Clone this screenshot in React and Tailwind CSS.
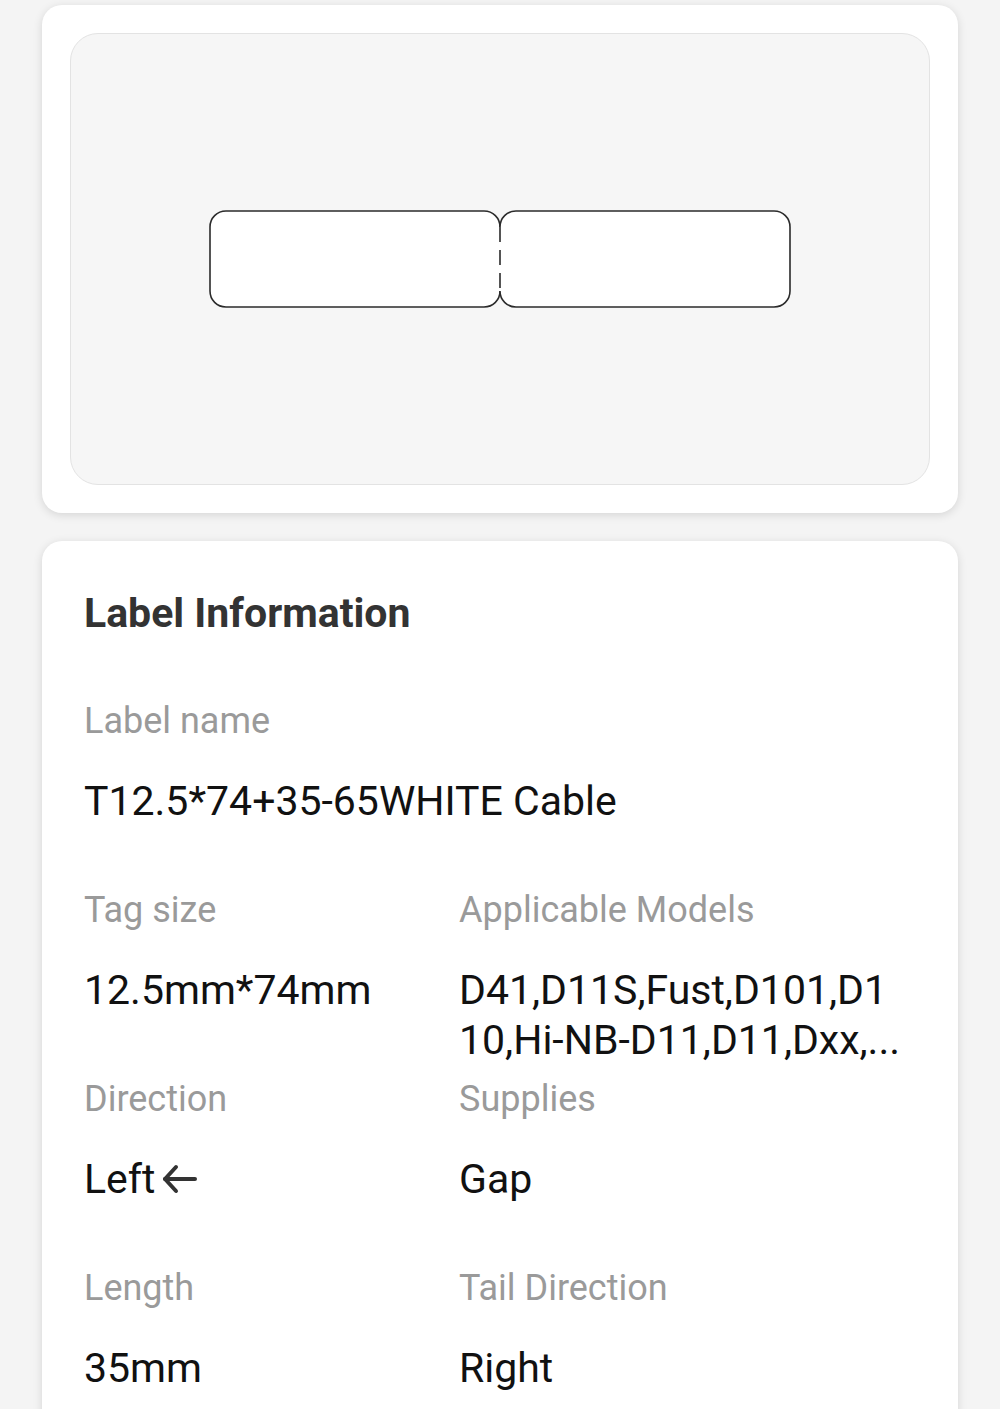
import React from "react";

const FONT = { fontFamily: "Roboto, 'Noto Sans', sans-serif" };

function LabelShape() {
  // two tags joined by a perforated gap
  return (
    <svg width="582" height="98" viewBox="0 0 582 98" fill="none">
      <path
        d="M291 17 C291 8 284 1 275 1 H17 C8 1 1 8 1 17 V81 C1 90 8 97 17 97 H275 C284 97 291 90 291 81"
        stroke="#2b2b2b"
        strokeWidth="1.6"
        fill="#ffffff"
      />
      <path
        d="M291 17 C291 8 298 1 307 1 H565 C574 1 581 8 581 17 V81 C581 90 574 97 565 97 H307 C298 97 291 90 291 81"
        stroke="#2b2b2b"
        strokeWidth="1.6"
        fill="#ffffff"
      />
      <line x1="291" y1="17" x2="291" y2="81" stroke="#2b2b2b" strokeWidth="1.6" strokeDasharray="15 8" />
    </svg>
  );
}

function ArrowLeft() {
  return (
    <svg width="36" height="30" viewBox="0 0 36 30" fill="none" className="ml-[5px]">
      <path d="M15 3 L4 15 L15 27" stroke="#333" strokeWidth="4" strokeLinecap="round" strokeLinejoin="round" />
      <path d="M4 15 H34" stroke="#333" strokeWidth="4" strokeLinecap="round" />
    </svg>
  );
}

function Field({ label, children }) {
  return (
    <div className="mb-[12px]">
      <div className="text-[36px] leading-[44px] text-[#9a9a9a]">{label}</div>
      <div className="mt-[33px] min-h-[100px] text-[41px] leading-[50px] text-[#111]">{children}</div>
    </div>
  );
}

export default function App() {
  return (
    <div className="h-[1409px] overflow-hidden bg-[#f4f4f4] pt-[5px]" style={FONT}>
      <div className="mx-[42px] rounded-[20px] bg-white p-[28px] shadow-[0_2px_10px_rgba(0,0,0,0.13)]">
        <div className="flex h-[452px] items-center justify-center rounded-[28px] border border-[#e3e3e3] bg-[#f6f6f6]">
          <LabelShape />
        </div>
      </div>

      <div className="mx-[42px] mt-[28px] rounded-[20px] bg-white px-[42px] pt-[48px] pb-[40px] shadow-[0_2px_10px_rgba(0,0,0,0.13)]">
        <h2 className="text-[41px] font-bold leading-[48px] text-[#333]">Label Information</h2>

        <div className="mt-[62px]">
          <Field label="Label name">T12.5*74+35-65WHITE Cable</Field>

          <div className="grid grid-cols-[375px_1fr]">
            <Field label="Tag size">12.5mm*74mm</Field>
            <Field label="Applicable Models">
              <span className="block whitespace-nowrap">D41,D11S,Fust,D101,D1</span>
              <span className="block whitespace-nowrap">10,Hi-NB-D11,D11,Dxx,...</span>
            </Field>
            <Field label="Direction">
              <span className="inline-flex items-center">
                Left
                <ArrowLeft />
              </span>
            </Field>
            <Field label="Supplies">Gap</Field>
            <Field label="Length">35mm</Field>
            <Field label="Tail Direction">Right</Field>
          </div>
        </div>
      </div>
    </div>
  );
}
